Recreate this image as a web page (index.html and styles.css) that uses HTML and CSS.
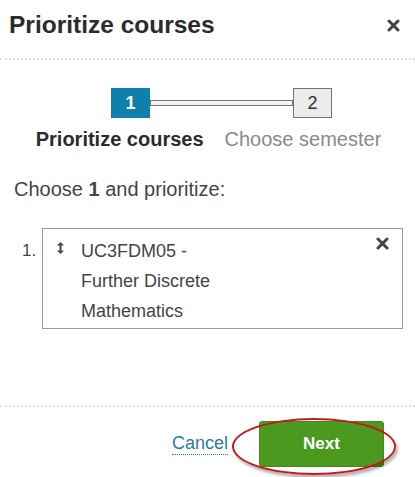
FILE: index.html
```html
<!DOCTYPE html>
<html lang="en">

<head>
  <title>Prioritize courses</title>
  <meta charset="UTF-8">
  <meta name="viewport" content="width=device-width, initial-scale=1">
  <link rel="stylesheet" href="styles.css">
</head>

<body>
  <div class="dialog">
    <div class="header">
      <h1>Prioritize courses</h1>
      <svg class="close" width="13" height="13" viewBox="0 0 13 13">
        <path d="M2 2 L11 11 M11 2 L2 11" stroke="#444" stroke-width="3" stroke-linecap="round" />
      </svg>
    </div>

    <div class="main">
      <div class="steps">
        <div class="step-boxes">
          <span class="step active">1</span>
          <span class="step-line"></span>
          <span class="step">2</span>
        </div>
        <div class="step-labels">
          <span class="label active">Prioritize courses</span>
          <span class="label">Choose semester</span>
        </div>
      </div>

      <p class="intro">Choose <b>1</b> and prioritize:</p>

      <div class="course-row">
        <span class="course-num">1.</span>
        <div class="course">
          <svg class="drag" width="7" height="12" viewBox="0 0 7 12">
            <path d="M3.5 0 L7 3.5 L0 3.5 Z M3.5 12 L7 8.5 L0 8.5 Z" fill="#444" />
            <rect x="2.5" y="3" width="2" height="6" fill="#444" />
          </svg>
          <span class="course-name">UC3FDM05 -<br>Further Discrete<br>Mathematics</span>
          <svg class="remove" width="13" height="13" viewBox="0 0 13 13">
            <path d="M2 2 L11 11 M11 2 L2 11" stroke="#444" stroke-width="3" stroke-linecap="round" />
          </svg>
        </div>
      </div>
    </div>

    <div class="footer">
      <a class="cancel" href="#">Cancel</a>
      <span class="next-wrap">
        <button class="next">Next</button>
        <span class="highlight"></span>
      </span>
    </div>
  </div>
</body>

</html>
```

FILE: styles.css
```css
* {
  box-sizing: border-box;
}

body {
  font-family: "Liberation Sans", Arial, Helvetica, sans-serif;
  margin: 0;
  background-color: #fff;
  color: #333;
}

.dialog {
  width: 415px;
  height: 477px;
  display: flex;
  flex-direction: column;
}

/* Header */
.header {
  display: flex;
  justify-content: space-between;
  align-items: center;
  height: 60px;
  padding: 0 15px 8px 9px;
  border-bottom: 2px dotted #e2e2e2;
}

.header h1 {
  margin: 0;
  font-size: 24.5px;
  font-weight: bold;
  color: #2b2b2b;
}

/* Main */
.main {
  flex: 1;
  padding: 0 12px 0 14px;
  border-bottom: 2px dotted #e2e2e2;
}

.steps {
  margin-top: 28px;
  display: flex;
  flex-direction: column;
  align-items: center;
}

.step-boxes {
  display: flex;
  align-items: center;
  margin-left: 26px;
}

.step {
  width: 39px;
  height: 30px;
  display: flex;
  align-items: center;
  justify-content: center;
  font-size: 18px;
  border: 1px solid #7b716c;
  background-color: #ececec;
  color: #333;
}

.step.active {
  background-color: #0f7fae;
  border-color: #0f7fae;
  color: #fff;
  font-weight: bold;
}

.step-line {
  width: 143px;
  height: 6px;
  border: 1px solid #7b716c;
  background-color: #f3f3f3;
}

.step-labels {
  display: flex;
  gap: 21px;
  margin-top: 10px;
  font-size: 20px;
}

.label {
  color: #8a8a8a;
}

.label.active {
  color: #2b2b2b;
  font-weight: bold;
}

.intro {
  margin: 27px 0 0 0;
  font-size: 20px;
  color: #444;
}

.course-row {
  display: flex;
  align-items: flex-start;
  margin-top: 27px;
}

.course-num {
  width: 28px;
  padding: 13px 0 0 8px;
  font-size: 17px;
  color: #444;
}

.course {
  flex: 1;
  display: flex;
  align-items: flex-start;
  border: 1px solid #999;
  height: 101px;
  padding: 7px 13px 0 14px;
}

.drag {
  margin: 6px 17px 0 0;
}

.course-name {
  flex: 1;
  font-size: 18px;
  line-height: 30px;
  color: #444;
}

.remove {
  margin-top: 1px;
}

/* Footer */
.footer {
  height: 70px;
  display: flex;
  align-items: center;
  justify-content: flex-end;
  gap: 31px;
  padding: 3px 31px 0 0;
}

.cancel {
  font-size: 18px;
  color: #2a7aa5;
  text-decoration: none;
  border-bottom: 1px dotted #2a7aa5;
}

.next-wrap {
  position: relative;
  display: inline-block;
}

.next {
  display: block;
  width: 125px;
  height: 46px;
  border: 1px solid #3f8a18;
  border-radius: 3px;
  background-color: #4b9a1f;
  color: #fff;
  font-family: "Liberation Sans", Arial, sans-serif;
  font-weight: bold;
  font-size: 17px;
}

/* Red annotation ellipse */
.highlight {
  position: absolute;
  left: -27px;
  top: -3px;
  width: 164px;
  height: 57px;
  border: 2px solid #c8161c;
  border-radius: 50%;
  box-shadow: 2px 3px 3px rgba(0, 0, 0, 0.3);
}
```
